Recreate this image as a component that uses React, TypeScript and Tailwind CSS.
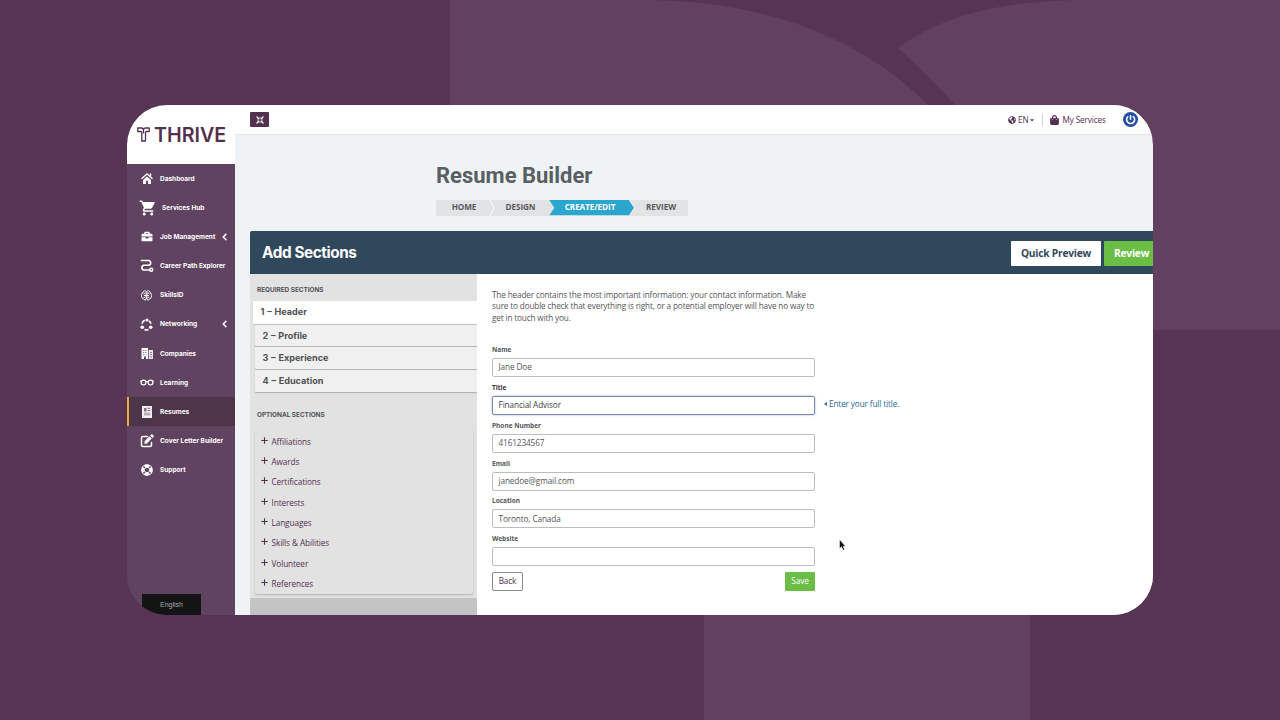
import type { ReactNode } from "react";
import clsx from "clsx";
import {
  FaBriefcase,
  FaCaretDown,
  FaGlobeAmericas,
  FaLifeRing,
  FaShoppingBag,
} from "react-icons/fa";
import { MdShoppingCart } from "react-icons/md";

interface NavItem {
  label: string;
  icon: ReactNode;
  active?: boolean;
  expandable?: boolean;
  wide?: boolean;
}

interface FormField {
  label: string;
  value: string;
  focused?: boolean;
  hint?: string;
}

const HomeIcon = () => (
  <svg viewBox="0 0 24 22" className="w-[12px] h-[11px]" fill="currentColor">
    <path d="M1 11.500 12 1.800 23 11.500" fill="none" stroke="currentColor" strokeWidth="2.600" />
    <path d="M17.500 1H20.500V7L17.500 4.500Z" />
    <path d="M12 6.800 20 13.800V22H14V15.500H10V22H4V13.800Z" />
  </svg>
);

const PathIcon = () => (
  <svg viewBox="0 0 28 26" className="w-[14px] h-[13px]" fill="none" stroke="currentColor" strokeWidth="3.400" strokeLinecap="round">
    <path d="M3 3H18a5 5 0 0 1 0 9.500H8a4.800 4.800 0 0 0 0 9.500H18" />
    <circle cx="22.500" cy="21.500" r="3" strokeWidth="2.800" />
  </svg>
);

const SkillsIcon = () => (
  <svg viewBox="0 0 22 22" className="size-[11px]" fill="none" stroke="currentColor" strokeWidth="1.900" strokeLinejoin="round">
    <path d="M10.200 3Q9.500 1 7 1.500Q4.500 2 4.500 4.500Q1 5.500 1.500 9Q0 11.500 1.500 14Q1.500 17 5 17.500Q6 20.500 8.500 20Q10.200 20 10.200 17.500Z" />
    <path d="M12 3Q12.500 1 15 1.500Q17.500 2 17.500 4.500Q21 5.500 20.500 9Q22 11.500 20.500 14Q20.500 17 17 17.500Q16 20.500 13.500 20Q12 20 12 17.500Z" />
    <path d="M5 8Q7.500 8 7 5.500M10 11H6M12 11H16M17 8Q14.500 8 15 5.500M5.500 14.500Q7.500 14 7.500 16M16.500 14.500Q14.500 14 14.500 16" />
  </svg>
);

const NetworkIcon = () => (
  <svg viewBox="0 0 26 26" className="size-[13px]" fill="none" stroke="currentColor" strokeWidth="3">
    <path d="M9.500 4.500A9.500 9.500 0 0 0 4 11.500M22 11.500a9.500 9.500 0 0 0-4-5.500M9 23a9.500 9.500 0 0 0 8 0" />
    <g fill="currentColor" stroke="none">
      <circle cx="14" cy="4" r="3.200" />
      <circle cx="4.500" cy="18.500" r="3.600" />
      <circle cx="21.500" cy="18.500" r="3.600" />
    </g>
  </svg>
);

const CompaniesIcon = () => (
  <svg viewBox="0 0 24 22" className="w-[12px] h-[11px]" fill="currentColor" fillRule="evenodd">
    <path d="M1 0H14V22H10V17H6V22H1ZM4 4V5.500H6.500V4ZM8.500 4V5.500H11V4ZM4 8.500V10H6.500V8.500ZM8.500 8.500V10H11V8.500ZM4 13V14.500H6.500V13ZM8.500 13V14.500H11V13Z" />
    <path d="M15.500 4H24V22H15.500ZM18.500 8V9.500H21.500V8ZM18.500 12.500V14H21.500V12.500ZM18.500 17V18.500H21.500V17Z" opacity="0.85" />
  </svg>
);

const GlassesIcon = () => (
  <svg viewBox="0 0 28 14" className="w-[14px] h-[7px]" fill="none" stroke="currentColor" strokeWidth="2.500">
    <circle cx="7" cy="7" r="4.800" />
    <circle cx="21" cy="7" r="4.800" />
    <path d="M11.500 6q2.500-1.800 5 0M3 5 .5 4M25 5l2.500-1" />
  </svg>
);

const ResumeIcon = () => (
  <svg viewBox="0 0 20 24" className="w-[10px] h-[12px]">
    <rect width="20" height="24" rx="1" fill="#f4eff3" />
    <path d="M4 4H9V11H4ZM11 3.500H16.500V5.500H11ZM11 8H16.500V10H11ZM4 13.500H16.500V15H4ZM4 17H16.500V18.500H4Z" fill="#836f80" />
  </svg>
);

const EditIcon = () => (
  <svg viewBox="0 0 28 28" className="size-[14px]" fill="currentColor">
    <path
      d="M15 5H6Q3 5 3 8V22Q3 25 6 25H20Q23 25 23 22V17"
      fill="none"
      stroke="currentColor"
      strokeWidth="3"
      strokeLinecap="round"
    />
    <path d="M9 19.500V14.500L19 4.500L23.500 9L13.500 19.500ZM20.500 3 22.500 1Q24 0 25.500 1.500L27 3Q28 4.500 27 6L25 7.800Z" />
  </svg>
);

const NAV_ITEMS: NavItem[] = [
  { label: "Dashboard", icon: <HomeIcon /> },
  { label: "Services Hub", icon: <MdShoppingCart className="size-[18px] shrink-0 ml-[2px]" />, wide: true },
  { label: "Job Management", icon: <FaBriefcase className="w-[12px] h-[11px]" />, expandable: true },
  { label: "Career Path Explorer", icon: <PathIcon /> },
  { label: "SkillsID", icon: <SkillsIcon /> },
  { label: "Networking", icon: <NetworkIcon />, expandable: true },
  { label: "Companies", icon: <CompaniesIcon /> },
  { label: "Learning", icon: <GlassesIcon /> },
  { label: "Resumes", icon: <ResumeIcon />, active: true },
  { label: "Cover Letter Builder", icon: <EditIcon /> },
  { label: "Support", icon: <FaLifeRing className="size-[12px]" /> },
];

const REQUIRED = ["2 – Profile", "3 – Experience", "4 – Education"];

const OPTIONAL = [
  "Affiliations",
  "Awards",
  "Certifications",
  "Interests",
  "Languages",
  "Skills & Abilities",
  "Volunteer",
  "References",
];

const FIELDS: FormField[] = [
  { label: "Name", value: "Jane Doe" },
  { label: "Title", value: "Financial Advisor", focused: true, hint: "Enter your full title." },
  { label: "Phone Number", value: "4161234567" },
  { label: "Email", value: "janedoe@gmail.com" },
  { label: "Location", value: "Toronto, Canada" },
  { label: "Website", value: "" },
];

const Backdrop = () => (
  <svg viewBox="0 0 1280 720" className="absolute inset-0 size-full" fill="#62405f">
    <path d="M450 0H650C775 2 865 42 928 105L1000 200H450Z" />
    <path d="M1280 0H1078C1000 2 945 14 898 48Q930 77 955 105L1060 330H1280Z" />
    <path d="M704 600H1030V720H704Z" />
  </svg>
);

const Sidebar = () => (
  <aside className="w-[108px] shrink-0 flex flex-col bg-[#604360] text-white font-['Inter',sans-serif]">
    <div className="h-[59px] shrink-0 bg-white flex items-center gap-[4px] pl-[10px] text-[#54304f]">
      <svg viewBox="0 0 26 30" className="w-[13px] h-[15px] shrink-0" fill="none" stroke="currentColor" strokeWidth="2.600" strokeLinejoin="round">
        <path d="M1.500 2H9Q12 2 13 5Q14 2 17 2H24.500V9H19Q17 9 17 11V28H9.500V11Q9.500 9 7.500 9H1.500Z" />
        <path d="M13 5V13" />
      </svg>
      <span className="pt-[2px] text-[19.700px] leading-none font-semibold">THRIVE</span>
    </div>
    <nav className="flex flex-col">
      {NAV_ITEMS.map((item) => (
        <a
          key={item.label}
          className={clsx(
            "h-[29.150px] flex items-center border-l-[2.500px] pl-[9px] text-[6.500px] font-bold whitespace-nowrap",
            item.active ? "bg-[#4e364a] border-[#e5ad3a]" : "border-transparent"
          )}
        >
          <span className="w-[17px] shrink-0 flex justify-center">{item.icon}</span>
          <span className={clsx("pt-[2px]", item.wide ? "ml-[7px]" : "ml-[5px]")}>{item.label}</span>
          {item.expandable && (
            <svg viewBox="0 0 8 12" className="w-[5px] h-[8px] ml-auto mr-[8px]" fill="none" stroke="currentColor" strokeWidth="2.400">
              <path d="M7 1 2 6l5 5" />
            </svg>
          )}
        </a>
      ))}
    </nav>
    <div className="mt-auto ml-[15px] w-[59px] h-[21px] pt-px bg-[#141414] flex items-center justify-center text-[7px] text-[#a6a6a6] font-['Liberation_Sans',sans-serif]">
      English
    </div>
  </aside>
);

const TopBar = () => (
  <header className="h-[30px] shrink-0 bg-white border-b border-[#e4e6ea] flex items-center pl-[15px] text-[#54304f] text-[8.200px] tracking-[-0.12px]">
    <button className="w-[19px] h-[15px] rounded-[1px] bg-[#54304f] text-white flex items-center justify-center">
      <svg viewBox="0 0 16 16" className="size-[8px]" fill="currentColor" stroke="currentColor" strokeWidth="2.200">
        <path d="M1 1 5 5M15 1 11 5M1 15 5 11M15 15 11 11" />
        <path d="M6.500 2.500V6.500H2.500ZM9.500 2.500V6.500H13.500ZM6.500 13.500V9.500H2.500ZM9.500 13.500V9.500H13.500Z" strokeWidth="0.600" />
      </svg>
    </button>
    <div className="ml-auto flex items-center w-[145px] shrink-0">
      <FaGlobeAmericas className="size-[8px]" />
      <span className="ml-[2px] pt-[1px] w-[11px]">EN</span>
      <FaCaretDown className="size-[6px]" />
      <span className="w-px h-[12px] bg-[#d5d5d9] ml-[7px]" />
      <FaShoppingBag className="w-[9px] h-[10px] ml-[7px]" />
      <span className="ml-[3.500px] pt-[1px] w-[43px] whitespace-nowrap">My Services</span>
      <svg viewBox="0 0 30 30" className="size-[15px] ml-[17.500px] shrink-0" fill="none">
        <circle cx="15" cy="15" r="15" fill="#2350a5" />
        <path d="M15 7V14.500M20.500 9A8 8 0 1 1 9.500 9.500" stroke="white" strokeWidth="3.200" strokeLinecap="round" />
      </svg>
      <span className="ml-[7px] w-px h-[6px] bg-[#cfc5ce]" />
    </div>
  </header>
);

const Steps = () => (
  <div className="flex w-[252px] h-[15.500px] mt-[11px] bg-[#e2e3e4] text-[8.200px] tracking-[-0.1px] font-bold text-[#595b5e]">
    <span className="w-[56px] flex items-center justify-center pb-px">HOME</span>
    <svg viewBox="0 0 5 16" className="w-[5px] h-[16px] -ml-[2px]" fill="none" stroke="#f4f6f8" strokeWidth="1.200">
      <path d="M0 0 4 8 0 16" />
    </svg>
    <span className="w-[54px] flex items-center justify-center pb-px pr-[3px]">DESIGN</span>
    <span className="w-[86px] flex items-center bg-[#f4f6f8] [clip-path:polygon(0_0,94%_0,100%_50%,94%_100%,0_100%,6%_50%)]">
      <span className="w-[85px] h-full flex items-center justify-center pb-px pr-[3px] bg-[#2ba6cf] text-white [clip-path:polygon(0_0,94%_0,100%_50%,94%_100%,0_100%,6%_50%)]">
        CREATE/EDIT
      </span>
    </span>
    <span className="flex-1 flex items-center justify-center pb-px pr-px">REVIEW</span>
  </div>
);

const SectionList = () => (
  <div className="w-[227px] shrink-0 flex flex-col bg-[#e2e2e2] text-[#505154]">
    <h3 className="h-[27px] pt-[11px] pl-[7px] text-[6.400px] leading-[10px] font-bold font-['Inter',sans-serif]">REQUIRED SECTIONS</h3>
    <div className="flex flex-col text-[9.100px] font-bold font-['Inter',sans-serif] [word-spacing:0.600px]">
      <div className="h-[22.500px] ml-[2.500px] pl-[8px] flex items-center bg-white rounded-l-[1px] shadow-[0_1px_1px_rgba(0,0,0,0.16)]">
        1 – Header
      </div>
      {REQUIRED.map((name) => (
        <div
          key={name}
          className="h-[21.500px] mt-[1.200px] ml-[4.500px] pl-[8px] flex items-center bg-[#f0f0f0] rounded-l-[1px] shadow-[0_1px_1px_rgba(0,0,0,0.22)]"
        >
          {name}
        </div>
      ))}
    </div>
    <h3 className="h-[39.500px] pt-[18px] pl-[7px] text-[6.400px] leading-[10px] font-bold font-['Inter',sans-serif]">OPTIONAL SECTIONS</h3>
    <ul className="h-[163px] ml-[5px] mr-[4px] rounded-[2px] shadow-[0_1px_2px_rgba(0,0,0,0.22)] text-[8.200px] tracking-[-0.08px] text-[#54304f]">
      {OPTIONAL.map((name) => (
        <li key={name} className="h-[20.350px] flex items-center pl-[6px] gap-[3.500px]">
          <svg viewBox="0 0 7 7" className="size-[7px] -mt-[2px]" stroke="currentColor" strokeWidth="1.100">
            <path d="M3.500 .3V6.700M.3 3.500H6.700" />
          </svg>
          <span className="pt-[1px]">{name}</span>
        </li>
      ))}
    </ul>
    <div className="mt-[4px] flex-1 bg-[#c4c4c4]" />
  </div>
);

const HeaderForm = () => (
  <div className="flex-1 bg-white pl-[15px] pt-[15px] text-[#55565a]">
    <p className="w-[328px] text-[8.200px] tracking-[-0.148px] leading-[11.300px] whitespace-nowrap">
      The header contains the most important information: your contact information. Make
      <br />
      sure to double check that everything is right, or a potential employer will have no way to
      <br />
      get in touch with you.
    </p>
    <div className="mt-[21px] flex flex-col">
      {FIELDS.map((field) => (
        <div key={field.label} className="h-[37.900px]">
          <label className={clsx("block h-[14px] pt-[1px] text-[6.500px] leading-[10px] font-bold", field.focused && "text-[#3d2a3b]")}>
            {field.label}
          </label>
          <div className="flex items-center">
            <div
              className={clsx(
                "w-[323px] h-[19px] border rounded-[2px] pl-[5.500px] pt-[0.500px] flex items-center text-[8.200px] tracking-[-0.1px]",
                field.focused ? "border-[#8088b0] text-[#3e3f42] shadow-[0_0_2px_#8a9ad0]" : "border-[#bdbdbf]"
              )}
            >
              {field.value}
            </div>
            {field.hint && (
              <span className="ml-[9px] -mt-[3px] flex items-center gap-[2px] text-[8.200px] tracking-[-0.12px] text-[#27698f] whitespace-nowrap">
                <svg viewBox="0 0 3 4" className="w-[3px] h-[4px]" fill="currentColor">
                  <path d="M3 0V4L0 2Z" />
                </svg>
                {field.hint}
              </span>
            )}
          </div>
        </div>
      ))}
    </div>
    <div className="w-[323px] pt-[0.500px] flex justify-between text-[8.200px] tracking-[-0.1px]">
      <button className="w-[31px] h-[19px] border border-[#8f8590] rounded-[2px] text-[#54304f]">Back</button>
      <button className="w-[30px] h-[19px] rounded-[1px] bg-[#6abd45] text-white">Save</button>
    </div>
  </div>
);

const App = () => {
  return (
    <div className="relative w-[1280px] h-[720px] overflow-hidden bg-[#573454] pl-[127px] pt-[105px] font-['Open_Sans',sans-serif]">
      <Backdrop />
      <div className="relative w-[1026px] h-[510px] rounded-[40px] overflow-hidden flex">
        <Sidebar />
        <main className="flex-1 min-w-0 flex flex-col bg-[#eff3f6]">
          <TopBar />
          <div className="h-[96px] shrink-0 pl-[201px] pt-[28px]">
            <h1 className="text-[22px] leading-[26px] font-bold text-[#595e63] font-['Roboto',sans-serif] whitespace-nowrap">Resume Builder</h1>
            <Steps />
          </div>
          <section className="ml-[15px] flex-1 flex flex-col">
            <div className="h-[43px] shrink-0 bg-[#2f485c] rounded-tl-[2px] flex items-center pl-[12px]">
              <h2 className="pt-[2px] text-[15.300px] tracking-[-0.400px] font-bold text-white font-['Inter',sans-serif]">Add Sections</h2>
              <div className="ml-auto pt-[1px] flex gap-[3px] text-[10.200px] tracking-[-0.2px] font-bold whitespace-nowrap">
                <button className="w-[90px] h-[25px] pt-[1.500px] rounded-[1px] bg-white text-[#2f485c]">Quick Preview</button>
                <button className="w-[49px] h-[25px] pt-[1.500px] rounded-l-[1px] bg-[#6abd45] text-white pl-[10px] text-left">Review</button>
              </div>
            </div>
            <div className="flex-1 flex">
              <SectionList />
              <HeaderForm />
            </div>
          </section>
        </main>
      </div>
      <svg viewBox="0 0 14 24" className="absolute left-[838.500px] top-[538.500px] w-[7px] h-[12px]">
        <path d="M1 1V19L5 15.500L8 22.500L11 21L8.200 14.500H13Z" fill="#111" stroke="white" strokeWidth="1" />
      </svg>
    </div>
  );
};

export default App;
